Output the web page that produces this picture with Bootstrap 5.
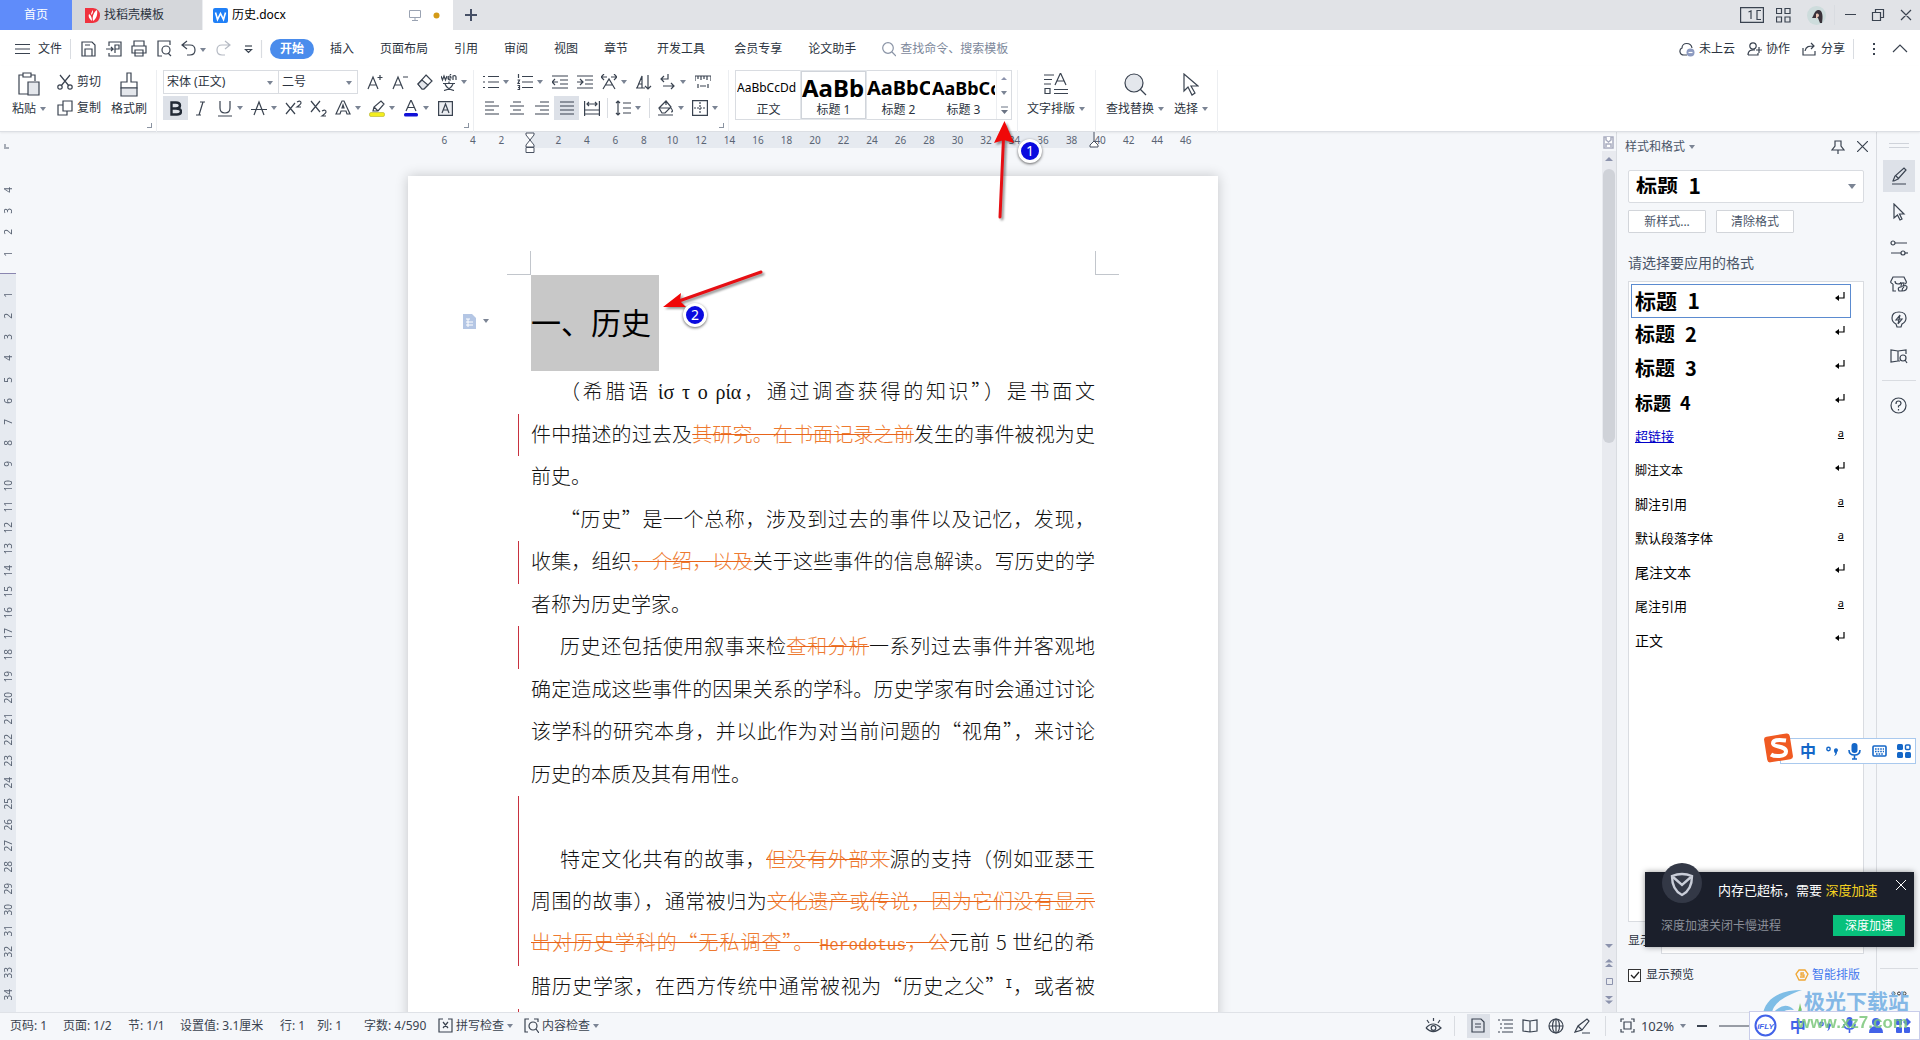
<!DOCTYPE html>
<html lang="zh-CN">
<head>
<meta charset="utf-8">
<meta name="viewport" content="width=device-width, initial-scale=1">
<title>历史.docx</title>
<link href="https://cdn.jsdelivr.net/npm/bootstrap@5.3.0/dist/css/bootstrap.min.css" rel="stylesheet">
<style>
:root{--ink:#2b3340;--soft:#5f6b80;--edge:#d9dce1;--pane:#f5f7fa}
html,body{height:100%}
body{font:12px/18px "Noto Sans","Noto Sans CJK SC",sans-serif;color:var(--ink);background:var(--pane);overflow:hidden}
button,select,input{font:inherit;color:inherit}
button{background:none;border:0;padding:0}
a{color:inherit;text-decoration:none}
svg{flex:none;display:block}
.ic{fill:none;stroke:#3a4350;stroke-width:1.2}
.car{width:0;height:0;flex:none;border:3px solid transparent;border-top:4px solid #7b8494;border-bottom:0}
.vr-line{width:1px;height:20px;background:var(--edge);flex:none}
/* title bar */
.titlebar{height:30px;background:#e1e3e7}
.tab-home{width:72px;background:#5f8cfa;color:#fff}
.tab-tpl{width:130px;background:#d5d7db;padding-left:13px}
.tab-doc{width:251px;background:#fff;padding:0 13px 0 10px;border-left:1px solid #eceef1}
.plus{width:36px}
.win{padding-right:8px}
.win .apps{margin:0 16px 0 12px}
.win .ctl{margin-left:1px}
/* menu */
.menubar{height:36px;background:#fff;padding:2px 12px 0 15px}
.menubar .tools{margin-left:2px}
.menus{gap:26px;padding-left:16px}
.menus .wide{margin-left:3px}
.pill{background:#4a8cec;color:#fff;border-radius:10px;width:44px;height:20px;margin:0 -10px 0 -9px;font-weight:700}
.find{border:0;outline:0;width:120px;padding:0;color:var(--soft);background:none}
.find::placeholder{color:#7d889b;opacity:1}
/* ribbon */
.ribbon{height:66px;background:#fff;padding-top:4px;border-bottom:1px solid #dcdfe4;box-shadow:0 1px 2px #0001;position:relative}
.grp{height:62px;border-right:1px solid #eceef1;padding-left:6px;position:relative}
.g1{width:157px}.g2{width:317px}.g3{width:255px}.g4{width:289px}.g5{width:78px}.g6{width:122px}
.rrow{height:24px;margin-bottom:2px}
.rb{width:25px;height:24px;display:flex;align-items:center;justify-content:center}
.rs{width:34px;height:24px;display:flex;align-items:center}
.rs svg{margin:0 4px}
.on{background:#dde1e8}
.launch{position:absolute;right:4px;bottom:4px;width:5px;height:5px;border:solid #8a93a1;border-width:0 1px 1px 0}
.fontsel{appearance:none;border:1px solid var(--edge);height:24px;padding:0 3px;background:#fff;border-radius:0}
.selwrap{position:relative;display:flex}
.selwrap .car{position:absolute;right:6px;top:11px}
.big{display:flex;flex-direction:column;align-items:center;height:50px}
.big .pic{height:28px;display:flex;align-items:center;justify-content:center}
.big .cap{display:flex;align-items:center;gap:4px;height:22px;white-space:nowrap}
.gallery{width:277px;height:50px;border:1px solid var(--edge)}
.gal{width:65px;height:48px;overflow:hidden;border:1px solid transparent;display:flex;flex-direction:column;align-items:center}
.gal.cur{border:1px solid #d0d4da;box-shadow:0 0 0 1px #e3e6ea}
.gal b,.gal i{display:block;height:31px;line-height:32px;color:#000;width:100%;text-align:left;font-style:normal;white-space:nowrap;overflow:hidden}
.gal span{line-height:14px}
.t12{font-size:12px}.t18{font-size:18px}.t20{font-size:20px}.t24{font-size:24px}
.galnav{width:14px;border-left:1px solid #eceef1}
/* work area */
.work{min-height:0}
.vruler{width:16px;position:relative;color:#5a6474;font-size:10px}
.vruler .corner{height:47px;padding:12px 0 0 4px}
.vruler .corner i{display:block;width:5px;height:5px;border:solid #a6acb6;border-width:0 0 2px 2px}
.vneg{height:85px}.vneg span,.vpos span{flex:1;display:flex;align-items:center;justify-content:center;writing-mode:vertical-rl}
.vneg span b,.vpos span b{font-weight:400;transform:rotate(180deg);line-height:12px}
.vgap{height:10px;border-bottom:1px solid #8a86b0}
.vpos{background:#e6eaf0;padding-top:10px;flex:1;overflow:hidden}
.vpos div{height:721px}
.canvas{min-width:0;overflow:hidden;padding-left:8px}
.sheetcol{width:810px}
.hruler{height:16px;padding:0 18px 0 22px;color:#5a6474;font-size:10px;position:relative;background:linear-gradient(90deg,transparent 122px,#e6eaf0 122px,#e6eaf0 687px,transparent 687px)}
.hruler span{flex:1;text-align:center;line-height:16px}
.mark-l{position:absolute;left:116px;top:0}.mark-r{position:absolute;left:680px;top:0}
.sheet{margin-top:28px;background:#fff;box-shadow:0 0 12px #0003;padding-top:75px;flex:1}
.marks{padding:0 99px}
.marks i{width:24px;height:24px;border:solid #c2c6cc;border-width:0 0 1px}
.marks .ml{border-right-width:1px}.marks .mr{border-left-width:1px}
.titlerow{padding-left:55px}
.titlerow .fold{width:68px;gap:7px;padding-bottom:4px}
.sel{background:#c8c8c8;height:96px;line-height:92px;font-size:30px;padding-right:8px;color:#000;margin:0}
.zh{font-family:"Noto Sans CJK SC",sans-serif;font-weight:300}
.sel.zh{font-weight:400}
.text{margin:0 123px;color:#111;font-size:20px;display:grid;grid-template-rows:repeat(16,1fr);height:680px}
.ln{display:flex;align-items:center;margin-left:-13px;padding-left:12px;border-left:1px solid transparent;min-width:0}
.ln>p{margin:0;flex:1;line-height:30px;padding-bottom:2px;white-space:nowrap;text-align:justify;text-align-last:justify}
.ln.chg{border-left-color:#c8313f}
.ln.end>p{text-align-last:left}
.ln.ind>p{padding-left:29px}
del{color:#ee7a30;text-decoration:line-through 1px #e8641a}
.mono{font-family:"Liberation Mono",monospace;font-size:16px;font-weight:400}
.greek{font-family:"Liberation Serif","DejaVu Serif",serif;font-weight:400}
.ln sup{font:12px/12px "Liberation Mono",monospace}
/* scrollbar */
.vscroll{width:14px;background:#e8eaef}
.vscroll .cap0{height:19px;background:var(--pane);padding:4px 1px 0}
.thumb{height:274px;margin:8px 1px 0;background:#cfd2d8;border-radius:6px}
.tri-u{border:4px solid transparent;border-bottom:4px solid #8c93ad;border-top:0;width:0;height:0}
.tri-d{border:4px solid transparent;border-top:4px solid #8c93ad;border-bottom:0;width:0;height:0}
/* task pane */
.pane{width:261px;border:solid var(--edge);border-width:0 1px;padding:0 12px 0 11px}
.pane h2{font-size:12px;line-height:18px;margin:0;font-weight:400;color:#4a5568}
.pane-head{height:38px;padding:6px 0 15px;margin-left:-3px}
.cursel{appearance:none;width:100%;height:33px;border:1px solid var(--edge);border-radius:2px;background:#fff;font-size:21px;font-weight:700;color:#000;padding:0 7px 3px;font-family:"Noto Sans CJK SC",sans-serif}
.selwrap.cs .car{border-width:4px;border-top-width:5px;border-bottom:0;right:8px;top:14px}
.pbtn{width:78px;height:23px;border:1px solid #d2d5da;background:#fff;border-radius:1px;color:#4a5568}
.plabel{font-size:14px;line-height:20px;color:#4a5568}
.styles{border:1px solid var(--edge);background:#fff;padding:2px 11px 0 2px;flex:1;min-height:0}
.sty{display:flex;width:220px;height:34px;padding:0 5px 3px 3px;align-items:center;justify-content:space-between;border:1px solid transparent;color:#000;text-align:left;font-family:"Noto Sans CJK SC",sans-serif;font-size:13px}
.sty svg,.sty u{margin-bottom:6px}
.sty u{font-family:"Noto Sans";font-size:11px;line-height:14px;margin-right:1px}
.sty.cur{border-color:#5b8bd0}
.h-a{font-size:21px;font-weight:700}.h-b{font-size:20px;font-weight:700}.h-c{font-size:18px;font-weight:700}
.t14{font-size:14px}
.lnk{color:#0000c8;text-decoration:underline}
.showrow{gap:6px;margin:6px 0 12px}
.showsel{appearance:none;flex:1;height:26px;border:1px solid var(--edge);background:#fff;padding:0 4px;font-size:12px}
.chk{appearance:none;width:13px;height:13px;border:1px solid #333;margin:0;background:#fff}
.chkbox{position:relative;display:flex}.chkbox svg{position:absolute;left:1px;top:1px;pointer-events:none}
/* side rail */
.rail{width:43px}
.rail button{width:32px;height:32px;margin-bottom:4px;display:flex;align-items:center;justify-content:center}
.grip{width:20px;height:5px;border:solid #cfd3da;border-width:1px 0;margin:11px 0 12px}
/* status bar */
.status{height:29px;border-top:1px solid #dfe2e7;background:var(--pane);padding:0 0 2px 10px;color:#3a4350}
.status .pct{font-size:13px;margin:0 6px}
/* overlays */
.over{position:absolute}
.arr1{left:990px;top:118px}.arr2{left:655px;top:262px}
.num{width:24px;height:24px;border-radius:50%;background:#0a0adf;border:3px solid #fff;color:#fff;font-size:14px;line-height:18px;text-align:center;box-shadow:0 1px 3px #0009}
.n1{left:1018px;top:139px}.n2{left:683px;top:303px}
.ime{right:4px;top:738px;width:136px;height:26px;background:#fff;border:1px solid #a9c9ee;padding:0 4px 0 19px;color:#1467c8;font-size:16px;font-weight:700}
.imelogo{right:124px;top:732px}
.pop{right:6px;top:872px;width:269px;height:75px;background:#1b1f2b;box-shadow:0 0 6px #0006;color:#fff;padding:9px 9px 0 16px}
.pop .msg{font-size:13px;line-height:18px;padding-left:57px}
.pop .sub{color:#8b8f99}
.pop .go{background:#08c17c;color:#fff;width:72px;height:21px;line-height:21px}
.yel{color:#f5d21f}
.shield{left:17px;top:-10px}
.popx{right:8px;top:8px}
.ifly{right:0;bottom:0;width:171px;height:29px;border:1px solid #c9cdea;background:#fff;color:#4262e8;padding:0 8px 0 4px;font-size:16px;font-weight:700}
.wm1{right:11px;top:986px;font:700 21px/28px "Noto Sans CJK SC",sans-serif;color:#84b8e6}
.wm2{right:12px;top:1011px;font:700 17px/24px "Liberation Sans",sans-serif;color:#7cc77c;opacity:.85}
.wmlogo{right:116px;top:986px}
</style>
</head>
<body class="d-flex flex-column position-relative">
<header>
<div class="titlebar d-flex align-items-stretch">
  <button class="tab-home">首页</button>
  <button class="tab-tpl d-flex align-items-center gap-1">
    <svg width="15" height="15" viewBox="0 0 15 15"><path d="M0 0h8q7 1 7 7.500T8 15H0z" fill="#f0323e"/><path d="M7 13C4 11 3 8 4 6c2 1 3 4 3 7zM8 13C7 8 9 4 12 2c1 5-1 9-4 11zM6 7c0-2 1-4 2-5 0 2 0 4-2 5z" fill="#fff"/></svg>
    <span>找稻壳模板</span></button>
  <div class="tab-doc d-flex align-items-center gap-1">
    <svg width="15" height="15" viewBox="0 0 15 15"><rect width="15" height="15" rx="2" fill="#2080f7"/><path d="M2.500 4.500l2 7 3-6 3 6 2-7" fill="none" stroke="#fff" stroke-width="1.600"/></svg>
    <span class="text-black me-auto">历史.docx</span>
    <svg class="me-1" width="12" height="12" viewBox="0 0 12 12" fill="none" stroke="#9aa3b2"><path d="M.5 1.500h11v7H.5zM6 8.500v3M3 11.500h6"/></svg>
    <svg class="ms-1" width="7" height="7"><circle cx="3.500" cy="3.500" r="3" fill="#d39a17"/></svg>
  </div>
  <button class="plus d-flex align-items-center justify-content-center" aria-label="新建"><svg width="12" height="12" stroke="#465066" stroke-width="2"><path d="M6 0v12M0 6h12"/></svg></button>
  <div class="win ms-auto d-flex align-items-center">
    <svg class="ic" width="24" height="16" viewBox="0 0 24 16"><path d="M.6.600h22.800v14.800H.6zM8.500 5l2.500-1v8M21 3.500h-4v9h4"/></svg>
    <svg class="ic apps" width="15" height="15" viewBox="0 0 15 15"><path d="M.5.500h5v5h-5zM9 .500h5v5H9zM.5 9h5v5h-5zM9 9h5v5H9z"/></svg>
    <svg width="19" height="19" viewBox="0 0 19 19"><circle cx="9.500" cy="9.500" r="9.500" fill="#cddcdc"/><path d="M5 12C7 9 8 3 12 4s4 7 3 13h-2l-2-5z" fill="#39323a"/><path d="M9 8c2-1 3 0 3 2l-3 3z" fill="#e8c3b3"/></svg>
    <div class="vr-line mx-2"></div>
    <svg class="ic ctl" width="68" height="14" viewBox="-1 0 68 14"><path d="M0 6.500h11M27.500 4.500h8v8h-8zM30.500 4.500v-3h8v8h-3M56 2l10 10M66 2L56 12"/></svg>
  </div>
</div>
<nav class="menubar d-flex align-items-center">
  <button class="d-flex align-items-center gap-2"><svg class="ic" width="15" height="12"><path d="M0 1.500h15M0 6h15M0 10.500h15"/></svg><span>文件</span></button>
  <div class="vr-line mx-2"></div>
  <svg class="ic tools" width="182" height="18" viewBox="80 40 182 18">
    <path d="M81 42h10l3 3v11H81zM84 56v-7h7v7M84 45h5M108 46v-4h12v14h-12v-3M105 49h7l-2-2m2 2l-2 2M114 53v-8h4v4h-4M133 46v-5h10v5M131 46h14v7h-14zM134 50h8v6h-8zM169 45v-4h-12v15h4M170 56l-3-3"/><circle cx="165" cy="50" r="4"/>
    <path d="M186 41l-5 4 5 4M181 45h8q5 0 5 5t-5 5h-3"/><path d="M224 41l5 4-5 4M229 45h-8q-5 0-5 5t5 5h3" stroke="#b5bac3"/>
    <path d="M244 46h7"/><path d="M244.500 49.500h6l-3 3z"/><path d="M199 48h6l-3 4z" fill="#7b8494" stroke="none"/><path d="M260.500 40v18" stroke="#d9dce1"/>
  </svg>
  <div class="menus d-flex align-items-center">
    <button class="pill">开始</button><a href="#">插入</a><a href="#">页面布局</a><a href="#">引用</a><a href="#">审阅</a><a href="#">视图</a><a href="#">章节</a><a href="#" class="wide">开发工具</a><a href="#" class="wide">会员专享</a><a href="#">论文助手</a>
    <label class="d-flex align-items-center gap-1"><svg class="ic" width="14" height="15" style="stroke:#8a94a6"><circle cx="6" cy="6" r="5.300"/><path d="M10 10l4 4"/></svg><input class="find" placeholder="查找命令、搜索模板" aria-label="查找命令"></label>
  </div>
  <div class="ms-auto d-flex align-items-center gap-1">
    <svg width="16" height="15" class="ic"><path d="M8 13H5C0 13 0 7 3 6c0-6 9-6 10 0"/><circle cx="11.500" cy="10.500" r="4" fill="#8c9ac0" stroke="none"/><path d="M9.500 10.500h4" stroke="#fff"/></svg><a href="#" class="me-2">未上云</a>
    <svg width="15" height="14" class="ic"><circle cx="6" cy="4" r="3.200"/><path d="M1 13c0-6 5-5 7-5M1 13h10v-2M12 5v6M9 8h6"/></svg><a href="#" class="me-2">协作</a>
    <svg width="15" height="14" class="ic"><path d="M1 6v7h12V9M3 9c1-5 4-5 9-5M9 1l3 3-3 3"/></svg><a href="#">分享</a>
    <div class="vr-line mx-1"></div>
    <svg width="46" height="14" class="ic"><path d="M12 1v2M12 6v2M12 11v2" stroke-width="2"/><path d="M31 10l7-7 7 7"/></svg>
  </div>
</nav>
<div class="ribbon d-flex">
  <div class="grp g1 d-flex" style="padding-left:12px">
    <button class="big"><span class="pic"><svg class="ic" width="22" height="24"><path d="M5 3H1v19h9M13 3h4v6M5 1h8v4H5z"/><path d="M10 10h11v13H10z" fill="#e4e7ec"/></svg></span><span class="cap">粘贴<i class="car"></i></span></button>
    <div style="margin:0 10px 0 11px">
      <button class="rrow d-flex align-items-center gap-1"><svg class="ic" width="16" height="16"><path d="M3 1l9 11M13 1L4 12"/><circle cx="3" cy="13" r="2.200"/><circle cx="13" cy="13" r="2.200"/></svg>剪切</button>
      <button class="rrow d-flex align-items-center gap-1"><svg class="ic" width="16" height="16"><path d="M6 1h9v10H6zM6 5H1v10h9v-4"/></svg>复制</button>
    </div>
    <button class="big"><span class="pic"><svg class="ic" width="18" height="25"><path d="M7 1h4v9h6v6H1v-6h6z"/><path d="M1 16h16v8H1z" fill="#e4e7ec"/></svg></span><span class="cap">格式刷</span></button>
    <i class="launch"></i>
  </div>
  <div class="grp g2">
    <div class="rrow d-flex">
      <div class="selwrap"><select class="fontsel" style="width:116px" aria-label="字体"><option>宋体 (正文)</option></select><i class="car"></i></div>
      <div class="selwrap me-1" style="margin-left:-1px"><select class="fontsel" style="width:80px" aria-label="字号"><option>二号</option></select><i class="car"></i></div>
      <button class="rb"><svg class="ic" width="16" height="16"><path d="M1 15L6 3l5 12M3 11h6M13 1v5M10.500 3.500h5"/></svg></button>
      <button class="rb"><svg class="ic" width="16" height="16"><path d="M1 15L6 3l5 12M3 11h6M11 3h5"/></svg></button>
      <button class="rb"><svg class="ic" width="16" height="16"><path d="M9 1l6 6-8 8H5L1 10z"/><path d="M1 10l4-4 6 5-4 4H5z" fill="#e4e7ec"/></svg></button>
      <button class="rs"><svg class="ic" width="16" height="17"><path d="M0 2l1.500 4L3 2l1.500 4L6 2M7 4h3q0-2-1.500-2T7 4t3 2M9 1l1-1M12 6V2q3-1 3 1v3M2 9.500h12M8 7.500v2M4 10q2 5 9 6.500M12 10q-2 5-9 6.500"/></svg><i class="car"></i></button>
    </div>
    <div class="rrow d-flex">
      <button class="rb on"><svg width="12" height="15" viewBox="0 0 12 15" fill="none" stroke="#222a36" stroke-width="2.400"><path d="M1.500 1.500H6q4 0 4 3T6 7.500H1.500zM6 7.500q5 0 5 3t-4 3H1.500v-12"/></svg></button>
      <button class="rb"><svg class="ic" width="10" height="15"><path d="M4 1h5M7 1L3 14M0 14h5"/></svg></button>
      <button class="rs"><svg class="ic" width="16" height="17"><path d="M3 1v7q0 5 5 5t5-5V1M1 16h14"/></svg><i class="car"></i></button>
      <button class="rs"><svg class="ic" width="16" height="16"><path d="M3 15L8 2l5 13M0 9.500h16"/></svg><i class="car"></i></button>
      <button class="rb"><svg class="ic" width="17" height="16"><path d="M1 3l9 11M10 3L1 14M12 2q4-2 4 1 0 1-4 4h4"/></svg></button>
      <button class="rb"><svg class="ic" width="17" height="17"><path d="M1 1l9 11M10 1L1 12M12 11q4-2 4 1 0 1-4 4h4"/></svg></button>
      <button class="rs"><svg class="ic" width="16" height="16"><path d="M1 14L7 1h2l6 13h-3l-1-3H6l-1 3zM7 8l1-3 1 3z"/></svg><i class="car"></i></button>
      <button class="rs"><svg class="ic" width="16" height="17"><path d="M4 11l1-4 7-6 3 3-6 7zM5 7l4 4"/><rect x="0.500" y="12.500" width="15" height="4" rx="1.500" fill="#f3ee1e" stroke="#b5b12a" stroke-width=".6"/></svg><i class="car"></i></button>
      <button class="rs"><svg class="ic" width="16" height="17"><path d="M3 11L8 0l5 11M5 7.500h6"/><rect x="1" y="13" width="14" height="3.500" rx="1.500" fill="#1111d8" stroke="none"/></svg><i class="car"></i></button>
      <button class="rb"><svg class="ic" width="15" height="15"><path d="M.6.600h13.800v13.800H.6z" fill="#eceef2"/><path d="M4 12l3.500-9L11 12M5 9h5"/></svg></button>
    </div>
    <i class="launch"></i>
  </div>
  <div class="grp g3" style="padding-left:5px">
    <div class="rrow d-flex">
      <button class="rs"><svg class="ic" width="16" height="16"><path d="M5 2.500h11M5 8h11M5 13.500h11M0 2.500h2M0 8h2M0 13.500h2" /></svg><i class="car"></i></button>
      <button class="rs"><svg class="ic" width="16" height="16"><path d="M5 2.500h11M5 8h11M5 13.500h11M1.500 0v4M.5 6h2L1 9.500h2M.5 11.500h2v4h-2M1 13.500h1"/></svg><i class="car"></i></button>
      <button class="rb"><svg class="ic" width="16" height="14"><path d="M0 1h16M8 5h8M8 9h8M0 13h16M0 7h6M3 4L0 7l3 3"/></svg></button>
      <button class="rb"><svg class="ic" width="16" height="14"><path d="M0 1h16M8 5h8M8 9h8M0 13h16M0 7h6M3 4l3 3-3 3"/></svg></button>
      <button class="rs"><svg class="ic" width="16" height="16"><path d="M0 3h6M3 0L0 3l3 3M10 3h6M13 0l3 3-3 3M2 15L8 5l6 10M5 11h6"/></svg><i class="car"></i></button>
      <button class="rb"><svg class="ic" width="16" height="16"><path d="M1 14L6 2v12M2 10h4M0 14h9M12 1v14M9 12l3 3 3-3"/></svg></button>
      <button class="rs"><svg class="ic" width="16" height="16"><path d="M8 0v5H1M4 2L1 5l3 3M3 12h11M11 9l3 3-3 3"/></svg><i class="car"></i></button>
      <button class="rb"><svg class="ic" width="16" height="14"><path d="M0 6V1h16v5M3 1v3M6 1v4M9 1v3M12 1v4M3 9v4M13 9v4M5 11h6"/></svg></button>
    </div>
    <div class="rrow d-flex align-items-center">
      <button class="rb"><svg class="ic" width="14" height="14"><path d="M0 1h9M0 5h14M0 9h9M0 13h14"/></svg></button>
      <button class="rb"><svg class="ic" width="14" height="14"><path d="M3 1h8M0 5h14M3 9h8M0 13h14"/></svg></button>
      <button class="rb"><svg class="ic" width="14" height="14"><path d="M5 1h9M0 5h14M5 9h9M0 13h14"/></svg></button>
      <button class="rb on"><svg class="ic" width="14" height="14"><path d="M0 1h14M0 5h14M0 9h14M0 13h14"/></svg></button>
      <button class="rb"><svg class="ic" width="16" height="15"><path d="M.6 0v15M15.400 0v15M3 3h10M5 1L3 3l2 2M11 1l2 2-2 2M1 9h14M1 13h14"/></svg></button>
      <div class="vr-line" style="margin:0 3px"></div>
      <button class="rs"><svg class="ic" width="16" height="16"><path d="M3 1v14M1 3l2-2 2 2M1 13l2 2 2-2M8 3h8M8 8h8M8 13h8"/></svg><i class="car"></i></button>
      <div class="vr-line" style="margin:0 4px"></div>
      <button class="rs"><svg class="ic" width="16" height="16"><path d="M1 8l7-7 5 6-6 6H4zM8 1v4M13 8q3 4 0 4M0 15h15M2 8h11"/></svg><i class="car"></i></button>
      <button class="rs"><svg class="ic" width="16" height="16"><path d="M.6.600h14.800v14.800H.6z"/><path d="M8 2v12M2 8h12" stroke-dasharray="2 1"/></svg><i class="car"></i></button>
    </div>
    <i class="launch"></i>
  </div>
  <div class="grp g4">
    <div class="gallery d-flex">
      <button class="gal"><i class="t12">AaBbCcDd</i><span>正文</span></button>
      <button class="gal cur"><b class="t24">AaBb</b><span>标题 1</span></button>
      <button class="gal"><b class="t20">AaBbC</b><span>标题 2</span></button>
      <button class="gal"><b class="t18">AaBbCc</b><span>标题 3</span></button>
      <div class="galnav d-flex flex-column align-items-center justify-content-around flex-fill"><i class="tri-u" style="border-width:0 3px 3px"></i><i class="car"></i><svg width="7" height="8"><path d="M0 1h7" stroke="#6b7484"/><path d="M0 4h7L3.500 8z" fill="#6b7484"/></svg></div>
    </div>
  </div>
  <div class="grp g5 d-flex" style="padding-left:9px">
    <button class="big"><span class="pic"><svg class="ic" width="24" height="22"><path d="M0 2h10M0 6.500h8M0 11h7M1 15.500h5v5H1zM10 16.500h14M10 20.500h14M11 12L16.500 0 22 12M13 8h7"/></svg></span><span class="cap">文字排版<i class="car"></i></span></button>
  </div>
  <div class="grp g6 d-flex" style="padding-left:10px;gap:10px">
    <button class="big"><span class="pic"><svg class="ic" width="23" height="23"><circle cx="10" cy="10" r="9" fill="#e4e7ec"/><path d="M16 16l6 6"/></svg></span><span class="cap">查找替换<i class="car"></i></span></button>
    <button class="big"><span class="pic"><svg class="ic" width="16" height="23"><path d="M1 1v17l4-4 4 8 3-2-4-7h7z"/></svg></span><span class="cap">选择<i class="car"></i></span></button>
  </div>
</div>
</header>

<main class="work d-flex flex-fill">
  <div class="vruler d-flex flex-column">
    <div class="corner"><i></i></div>
    <div class="vneg d-flex flex-column" id="vneg"></div>
    <div class="vgap"></div>
    <div class="vpos"><div class="d-flex flex-column" id="vpos"></div></div>
  </div>
  <div class="canvas flex-fill d-flex justify-content-center">
    <div class="sheetcol d-flex flex-column">
      <div class="hruler d-flex" id="hruler">
        <svg class="mark-l" width="12" height="22" fill="#fff" stroke="#4a5362"><path d="M2 1h8v2L6 8 2 3zM6 8l4 5v2H2v-2zM2 15.500h8v5H2z"/></svg>
        <svg class="mark-r" width="12" height="16" fill="#fff" stroke="#4a5362"><path d="M6 0v9M6 9l4 4v2H2v-2z"/></svg>
      </div>
      <article class="sheet">
        <div class="marks d-flex justify-content-between"><i class="ml"></i><i class="mr"></i></div>
        <div class="titlerow d-flex align-items-center">
          <div class="fold d-flex align-items-center"><svg width="13" height="15"><path d="M0 0h9l4 4v11H0z" fill="#b4c6e4"/><path d="M3 5h4M3 8h7M3 11h7M5 5v8" stroke="#fff"/></svg><i class="car"></i></div>
          <h1 class="sel zh">一、历史</h1>
        </div>
        <div class="text zh">
          <div class="ln ind"><p>（希腊语 <span class="greek">ἱσ τ ο ρ&#x3AF;α</span>，通过调查获得的知识”）是书面文</p></div>
          <div class="ln chg"><p>件中描述的过去及<del>其研究。在书面记录之前</del>发生的事件被视为史</p></div>
          <div class="ln end"><p>前史。</p></div>
          <div class="ln ind"><p>“历史”是一个总称，涉及到过去的事件以及记忆，发现，</p></div>
          <div class="ln chg"><p>收集，组织<del>，介绍，以及</del>关于这些事件的信息解读。写历史的学</p></div>
          <div class="ln end"><p>者称为历史学家。</p></div>
          <div class="ln ind chg"><p>历史还包括使用叙事来检<del>查和分析</del>一系列过去事件并客观地</p></div>
          <div class="ln"><p>确定造成这些事件的因果关系的学科。历史学家有时会通过讨论</p></div>
          <div class="ln"><p>该学科的研究本身，并以此作为对当前问题的“视角”，来讨论</p></div>
          <div class="ln end"><p>历史的本质及其有用性。</p></div>
          <div class="ln chg"></div>
          <div class="ln ind chg"><p>特定文化共有的故事，<del>但没有外部来</del>源的支持（例如亚瑟王</p></div>
          <div class="ln chg"><p>周围的故事），通常被归为<del>文化遗产或传说，因为它们没有显示</del></p></div>
          <div class="ln chg"><p><del>出对历史学科的“无私调查”。 </del><del class="mono">Herodotus</del><del>，公</del>元前 5 世纪的希</p></div>
          <div class="ln"><p>腊历史学家，在西方传统中通常被视为“历史之父”<sup>I</sup>，或者被</p></div>
          <div class="ln chg"></div>
        </div>
      </article>
    </div>
  </div>
  <div class="vscroll d-flex flex-column">
    <div class="cap0"><svg width="11" height="13" fill="#fff" stroke="#a9adc0" stroke-width="1.500"><path d="M1 1h9v11H1z"/><path d="M3 1v3l2.500 2L8 4V1M3 11V8h5v3" /></svg></div>
    <i class="tri-u mx-auto" style="margin-top:6px"></i>
    <div class="thumb"></div>
    <div class="mt-auto d-flex flex-column align-items-center" style="gap:11px;padding-bottom:8px">
      <i class="tri-d"></i>
      <svg width="8" height="8" fill="#8c93ad"><path d="M4 0l4 3.500H0zM4 4.500L8 8H0z"/></svg>
      <svg width="7" height="7" fill="none" stroke="#8c93ad"><path d="M.5.500h6v6h-6z"/></svg>
      <svg width="8" height="8" fill="#8c93ad"><path d="M4 8L0 4.500h8zM4 3.500L0 0h8z"/></svg>
    </div>
  </div>
  <aside class="pane d-flex flex-column">
    <div class="pane-head d-flex align-items-center">
      <h2>样式和格式</h2><i class="car ms-1"></i>
      <svg class="ic ms-auto" width="14" height="14"><path d="M4 1h6v5l3 4H1l3-4zM7 10v4"/></svg>
      <svg class="ic" style="margin-left:12px;margin-right:-4px" width="11" height="11"><path d="M0 0l11 11M11 0L0 11"/></svg>
    </div>
    <div class="selwrap cs"><select class="cursel" aria-label="当前样式"><option>标题&ensp;1</option></select><i class="car"></i></div>
    <div class="d-flex" style="gap:10px;margin:7px 0 20px"><button class="pbtn">新样式...</button><button class="pbtn">清除格式</button></div>
    <div class="plabel mb-2">请选择要应用的格式</div>
    <div class="styles">
      <button class="sty cur"><span class="h-a">标题&ensp;1</span><svg class="ret"></svg></button>
      <button class="sty"><span class="h-b">标题&ensp;2</span><svg class="ret"></svg></button>
      <button class="sty"><span class="h-b">标题&ensp;3</span><svg class="ret"></svg></button>
      <button class="sty"><span class="h-c">标题&ensp;4</span><svg class="ret"></svg></button>
      <button class="sty"><span class="lnk">超链接</span><u>a</u></button>
      <button class="sty"><span class="t12">脚注文本</span><svg class="ret"></svg></button>
      <button class="sty"><span>脚注引用</span><u>a</u></button>
      <button class="sty"><span>默认段落字体</span><u>a</u></button>
      <button class="sty"><span class="t14">尾注文本</span><svg class="ret"></svg></button>
      <button class="sty"><span>尾注引用</span><u>a</u></button>
      <button class="sty"><span class="t14">正文</span><svg class="ret"></svg></button>
    </div>
    <label class="showrow d-flex align-items-center">显示: <select class="showsel"><option>有效样式</option></select></label>
    <div class="d-flex align-items-center" style="margin-bottom:28px">
      <label class="d-flex align-items-center" style="gap:5px"><span class="chkbox"><input type="checkbox" class="chk" checked><svg width="11" height="11" fill="none" stroke="#222" stroke-width="1.300"><path d="M2 5l3 3 5-6"/></svg></span>显示预览</label>
      <a href="#" class="ms-auto d-flex align-items-center me-1" style="color:#4477ee;gap:3px"><svg width="14" height="12" fill="none" stroke="#f0a836" stroke-width="1.300"><path d="M4 1h6l3 4-3 6H4L1 5z"/><path d="M9 4H6v2h3v2H5"/></svg>智能排版</a>
    </div>
  </aside>
  <div class="rail d-flex flex-column align-items-center">
    <div class="grip"></div>
    <button class="on"><svg class="ic" width="18" height="18"><path d="M2 17h14M3 14l2-5 9-8 2 2-8 9-4 2zM6 9l3 3"/></svg></button>
    <button><svg class="ic" width="14" height="18"><path d="M2 1v14l3.500-3 2.500 5 2-1-2.500-5H12z"/></svg></button>
    <button><svg class="ic" width="18" height="16"><path d="M5 3h12M1 13h10"/><circle cx="3" cy="3" r="2"/><circle cx="13" cy="13" r="2"/><path d="M15 13h3"/></svg></button>
    <button><svg class="ic" width="18" height="17"><path d="M6 15H3V8M3 8Q0 7 1 5l2-4h11l2 4q1 2-1 3M5 5q0 3 3 3t3-2M9 15q-2-4 2-4 0-5 3-4 0 2-1 3 4-1 4 1 0 4-5 4zM12 15q0-3 2-4"/></svg></button>
    <button><svg class="ic" width="16" height="18"><path d="M5 13q-4-2-4-6 0-6 7-6t7 6q0 4-4 6l-1 3H6zM9 4L5 9h3l-1 4 4-5H8z"/></svg></button>
    <button><svg class="ic" width="18" height="16"><path d="M8 13L1 14V2l7 1 8-1v4M8 3v10h2"/><circle cx="13" cy="10" r="3"/><path d="M15 12l2 3"/></svg></button>
    <div style="width:34px;height:1px;background:#d9dce1;margin:4px 0 8px"></div>
    <button><svg class="ic" width="17" height="17"><circle cx="8.500" cy="8.500" r="7.500"/><path d="M6 7q0-3 2.500-3T11 6.500Q11 8 8.500 9v1.500M8.500 12v1.500"/></svg></button>
    <div class="mt-auto" style="width:38px;height:1px;background:#d9dce1;margin-bottom:22px"></div>
    <svg width="16" height="5" style="margin-bottom:16px" fill="none" stroke="#333"><circle cx="2.500" cy="2.500" r="1.500"/><circle cx="8" cy="2.500" r="1.500"/><circle cx="13.500" cy="2.500" r="1.500"/></svg>
  </div>
</main>

<footer class="status d-flex align-items-center">
  <span style="width:53px">页码: 1</span><span style="width:65px">页面: 1/2</span><span style="width:52px">节: 1/1</span><span style="width:100px">设置值: 3.1厘米</span><span style="width:37px">行: 1</span><span style="width:47px">列: 1</span><span style="width:74px">字数: 4/590</span>
  <button class="d-flex align-items-center" style="gap:3px;width:86px"><svg class="ic" width="15" height="15"><path d="M5 1H1v13h13V1h-4M5 4l5 6M10 4l-5 6"/></svg>拼写检查<i class="car"></i></button>
  <button class="d-flex align-items-center" style="gap:3px"><svg class="ic" width="15" height="15"><path d="M5 1H1v13h3M10 1h4v3"/><circle cx="9" cy="8" r="4"/><path d="M12 11l3 4"/></svg>内容检查<i class="car"></i></button>
  <div class="ms-auto d-flex align-items-center" style="padding-right:170px">
    <svg class="ic" width="17" height="15"><path d="M1 10q7-8 15 0-8 7-15 0M8.500 0v3M2 2l2 3M15 2l-2 3"/><circle cx="8.500" cy="10" r="2.300"/></svg>
    <div class="vr-line" style="margin:0 12px"></div>
    <button class="rb on" style="width:23px"><svg class="ic" width="14" height="15"><path d="M1 1h9l3 3v10H1zM4 6h6M4 9h6"/></svg></button>
    <svg class="ic" style="margin:0 9px 0 8px" width="15" height="14"><path d="M0 1h2M4 1h11M2 5h2M6 5h9M2 9h2M6 9h9M0 13h2M4 13h11"/></svg>
    <svg class="ic" width="16" height="14"><path d="M8 2v11M8 2L1 1v11l7 1 7-1V1z"/></svg>
    <svg class="ic" style="margin:0 10px" width="16" height="16"><circle cx="8" cy="8" r="7"/><ellipse cx="8" cy="8" rx="3.500" ry="7"/><path d="M1 8h14M8 1v14"/></svg>
    <svg class="ic" width="17" height="16"><path d="M1 14l3-6 9-7 2 2-7 9zM4 8l4 4M8 15h8"/></svg>
    <div class="vr-line" style="margin:0 14px"></div>
    <svg class="ic" width="15" height="15"><path d="M1 4V1h3M11 1h3v3M14 11v3h-3M4 14H1v-3M4 4h7v7H4z"/></svg>
    <span class="pct">102%</span><i class="car"></i>
    <svg style="margin-left:11px" width="53" height="6" stroke="#3a4350"><path d="M0 3h10" stroke-width="2"/><path d="M22 3h31"/></svg>
  </div>
</footer>

<svg class="over arr1" width="32" height="104" style="filter:drop-shadow(2px 2px 1px #0006)"><path d="M10 99L13.500 20" stroke="#e60f14" stroke-width="3" stroke-linecap="round"/><path d="M14.500 3L24 25l-10-3-10 3z" fill="#f00808"/></svg>
<svg class="over arr2" width="114" height="56" style="filter:drop-shadow(2px 2px 1px #0006)"><path d="M106 10L24 39" stroke="#e60f14" stroke-width="3" stroke-linecap="round"/><path d="M8 45l18-14-1 8 6 6z" fill="#f00808"/></svg>
<div class="over num n1">1</div>
<div class="over num n2">2</div>

<div class="over ime d-flex align-items-center justify-content-between"><span>中</span>
  <svg width="12" height="12" fill="#1467c8"><circle cx="2.500" cy="4" r="1.700" fill="none" stroke="#1467c8" stroke-width="1.400"/><path d="M8 5a2 2 0 1 1 3 2q0 3-3 4 2-2 1-3-1 0-1-3z"/></svg>
  <svg width="13" height="17" fill="#1467c8"><rect x="3.500" y="0" width="6" height="10" rx="3"/><path d="M1 7q0 5 5.500 5T12 7M6.500 12v4M4 16h5" fill="none" stroke="#1467c8" stroke-width="1.600"/></svg>
  <svg width="15" height="12" fill="none" stroke="#1467c8" stroke-width="1.600"><rect x="1" y="1" width="13" height="10" rx="1"/><path d="M3 4h9M3 6.500h9M4 9h7" stroke-dasharray="1.600 1"/></svg>
  <svg width="14" height="14" fill="#1467c8"><rect width="6" height="6" rx="1.500"/><rect x="8.500" y="1" width="4.500" height="4.500" rx="1" fill="none" stroke="#1467c8" stroke-width="1.500"/><rect y="8" width="6" height="6" rx="1.500"/><rect x="8" y="8" width="6" height="6" rx="1.500"/></svg>
</div>
<svg class="over imelogo" width="34" height="32"><rect x="3.500" y="3" width="26" height="26" rx="3" fill="#f05a22" transform="rotate(-9 16 16)"/><path d="M24 8.500q-13-2-13 3c0 4 13 2 13 8 0 6-12 5-15 3" fill="none" stroke="#fff" stroke-width="4"/></svg>

<div class="over wm1">极光下载站</div>
<svg class="over wmlogo" width="44" height="44"><path d="M2 36C2 12 20 4 42 4 24 10 12 18 12 28q12-14 22-4-12-2-16 8 10 6 24-10Q40 44 16 42q10-4 14-10Q14 36 2 36" fill="#68b3e2" opacity=".85"/><path d="M14 43q22 0 26-26 6 20-12 27z" fill="#7cc66a"/></svg>
<div class="over ifly d-flex align-items-center justify-content-between">
  <svg width="23" height="23"><circle cx="11.500" cy="11.500" r="10" fill="#fff" stroke="#4262e8" stroke-width="2"/><text x="11.500" y="15" font-size="8" font-weight="700" font-style="italic" text-anchor="middle" fill="#4262e8" font-family="Liberation Sans, sans-serif">iFLY</text></svg>
  <span>中</span>
  <svg width="12" height="12" fill="#4262e8"><circle cx="2.500" cy="4" r="1.700" fill="none" stroke="#4262e8" stroke-width="1.400"/><path d="M8 5a2 2 0 1 1 3 2q0 3-3 4 2-2 1-3-1 0-1-3z"/></svg>
  <svg width="13" height="17" fill="#4262e8"><rect x="3.500" width="6" height="10" rx="3"/><path d="M1 7q0 5 5.500 5T12 7M6.500 12v4" fill="none" stroke="#4262e8" stroke-width="1.600"/></svg>
  <svg width="14" height="15" fill="#4262e8"><circle cx="7" cy="4" r="4"/><path d="M0 15q0-7 7-7t7 7z"/></svg>
  <svg width="15" height="15" fill="#4262e8"><rect y="1" width="6" height="6" rx="1"/><path d="M11 0l4 4-4 4-4-4z"/><rect y="9" width="6" height="6" rx="1"/><rect x="8" y="9" width="6" height="6" rx="1"/></svg>
</div>
<div class="over wm2">www.xz7.com</div>

<section class="over pop">
  <svg class="over shield" width="42" height="42"><circle cx="20" cy="21" r="20" fill="#333846"/><path d="M10 14q10-4 20 0 0 14-10 19-10-5-10-19z" fill="none" stroke="#c9cdd8" stroke-width="2.400"/><path d="M11 15l9 8 9-8" fill="none" stroke="#c9cdd8" stroke-width="2.400"/></svg>
  <button class="over popx" aria-label="关闭"><svg width="10" height="10" stroke="#fff"><path d="M0 0l10 10M10 0L0 10"/></svg></button>
  <div class="msg">内存已超标，需要 <span class="yel">深度加速</span></div>
  <div class="d-flex justify-content-between align-items-center mt-3"><span class="sub">深度加速关闭卡慢进程</span><button class="go">深度加速</button></div>
</section>

<script>
// ruler numbers
const cells=(id,list,tag)=>{const el=document.getElementById(id);list.forEach(n=>{const s=document.createElement('span');s.innerHTML=tag?'<b>'+n+'</b>':n;el.appendChild(s)})};
cells('hruler',[6,4,2,''].concat(Array.from({length:23},(_,i)=>2*i+2)));
cells('vneg',[4,3,2,1],true);
cells('vpos',Array.from({length:34},(_,i)=>i+1),true);
// paragraph-style marks
document.querySelectorAll('svg.ret').forEach(s=>{s.setAttribute('width',10);s.setAttribute('height',10);s.innerHTML='<path d="M9 0v6H2" fill="none" stroke="#000" stroke-width="1.200"/><path d="M0 6l4-3v6z"/>'});
</script>
<script src="https://cdn.jsdelivr.net/npm/bootstrap@5.3.0/dist/js/bootstrap.bundle.min.js"></script>
</body>
</html>
